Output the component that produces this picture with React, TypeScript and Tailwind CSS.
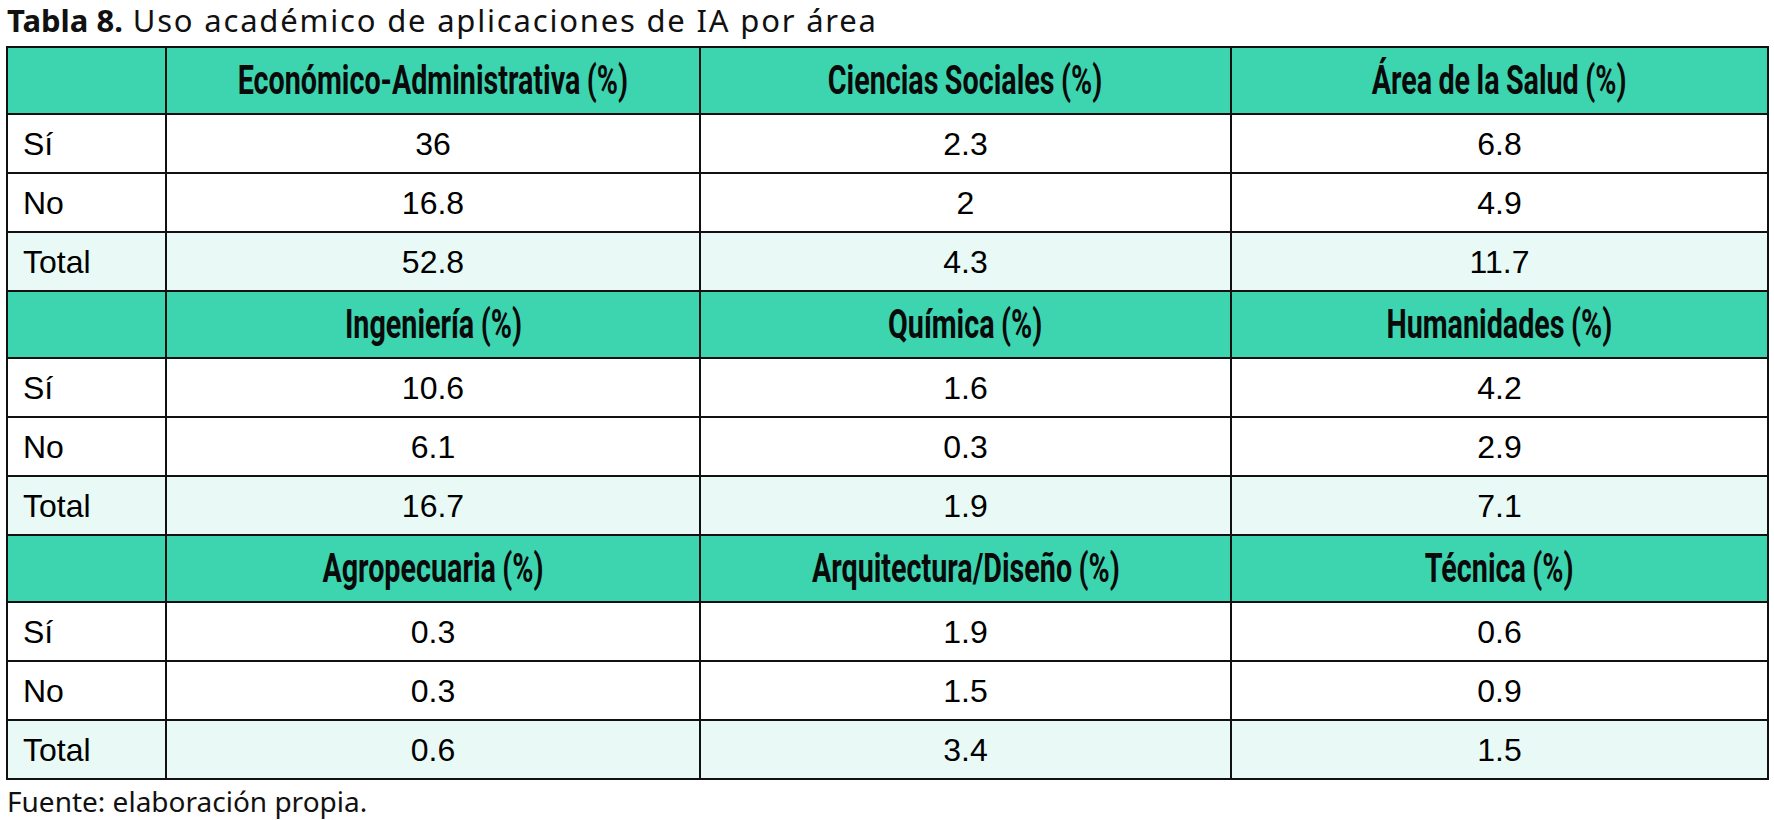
const sections = [
  {
    heads: ["Económico-Administrativa (%)", "Ciencias Sociales (%)", "Área de la Salud (%)"],
    rows: [
      ["Sí", "36", "2.3", "6.8"],
      ["No", "16.8", "2", "4.9"],
      ["Total", "52.8", "4.3", "11.7"],
    ],
  },
  {
    heads: ["Ingeniería (%)", "Química (%)", "Humanidades (%)"],
    rows: [
      ["Sí", "10.6", "1.6", "4.2"],
      ["No", "6.1", "0.3", "2.9"],
      ["Total", "16.7", "1.9", "7.1"],
    ],
  },
  {
    heads: ["Agropecuaria (%)", "Arquitectura/Diseño (%)", "Técnica (%)"],
    rows: [
      ["Sí", "0.3", "1.9", "0.6"],
      ["No", "0.3", "1.5", "0.9"],
      ["Total", "0.6", "3.4", "1.5"],
    ],
  },
];

const caption = { fontFamily: '"Noto Sans", "Open Sans", sans-serif' };
const cellFont = { fontFamily: '"Liberation Sans", Arial, sans-serif' };
const headFont = { fontFamily: 'Roboto, "Liberation Sans", sans-serif' };

export default function App() {
  return (
    <div className="w-[1774px] h-[820px] bg-white text-black overflow-hidden">
      {/* Title */}
      <div className="h-[46px] pl-[7px] text-[31px] leading-[40px] text-[#111] whitespace-nowrap" style={caption}>
        <span className="font-bold">Tabla 8.</span>
        <span className="tracking-[1.8px]"> Uso académico de aplicaciones de IA por área</span>
      </div>

      {/* Table */}
      <table className="ml-[6px] w-[1761px] table-fixed border-collapse" style={cellFont}>
        <colgroup>
          <col className="w-[159px]" />
          <col className="w-[534px]" />
          <col className="w-[531px]" />
          <col className="w-[537px]" />
        </colgroup>
        <tbody>
          {sections.map((s, si) => (
            <>
              <tr key={`h${si}`} className="h-[67px] bg-[#3dd5b0]">
                <td className="border-2 border-[#111]" />
                {s.heads.map((h) => (
                  <td key={h} className="border-2 border-[#111] p-0">
                    <div className="flex justify-center">
                      <span
                        className="shrink-0 origin-center scale-x-[0.7] whitespace-nowrap text-[41px] font-bold leading-none text-[#0a0a0a] [word-spacing:-1px]"
                        style={headFont}
                      >
                        {h}
                      </span>
                    </div>
                  </td>
                ))}
              </tr>
              {s.rows.map((r, ri) => (
                <tr
                  key={`r${si}-${ri}`}
                  className={ri === 2 ? "h-[59px] bg-[#e9faf6]" : "h-[59px] bg-white"}
                >
                  <td className="border-2 border-[#111] pl-[15px] text-left text-[32px] leading-none">
                    {r[0]}
                  </td>
                  {r.slice(1).map((v, vi) => (
                    <td key={vi} className="border-2 border-[#111] text-center text-[32px] leading-none">
                      {v}
                    </td>
                  ))}
                </tr>
              ))}
            </>
          ))}
        </tbody>
      </table>

      {/* Source */}
      <div className="pl-[7px] pt-[4px] text-[28px] leading-[34px] text-[#111]" style={caption}>
        Fuente: elaboración propia.
      </div>
    </div>
  );
}
